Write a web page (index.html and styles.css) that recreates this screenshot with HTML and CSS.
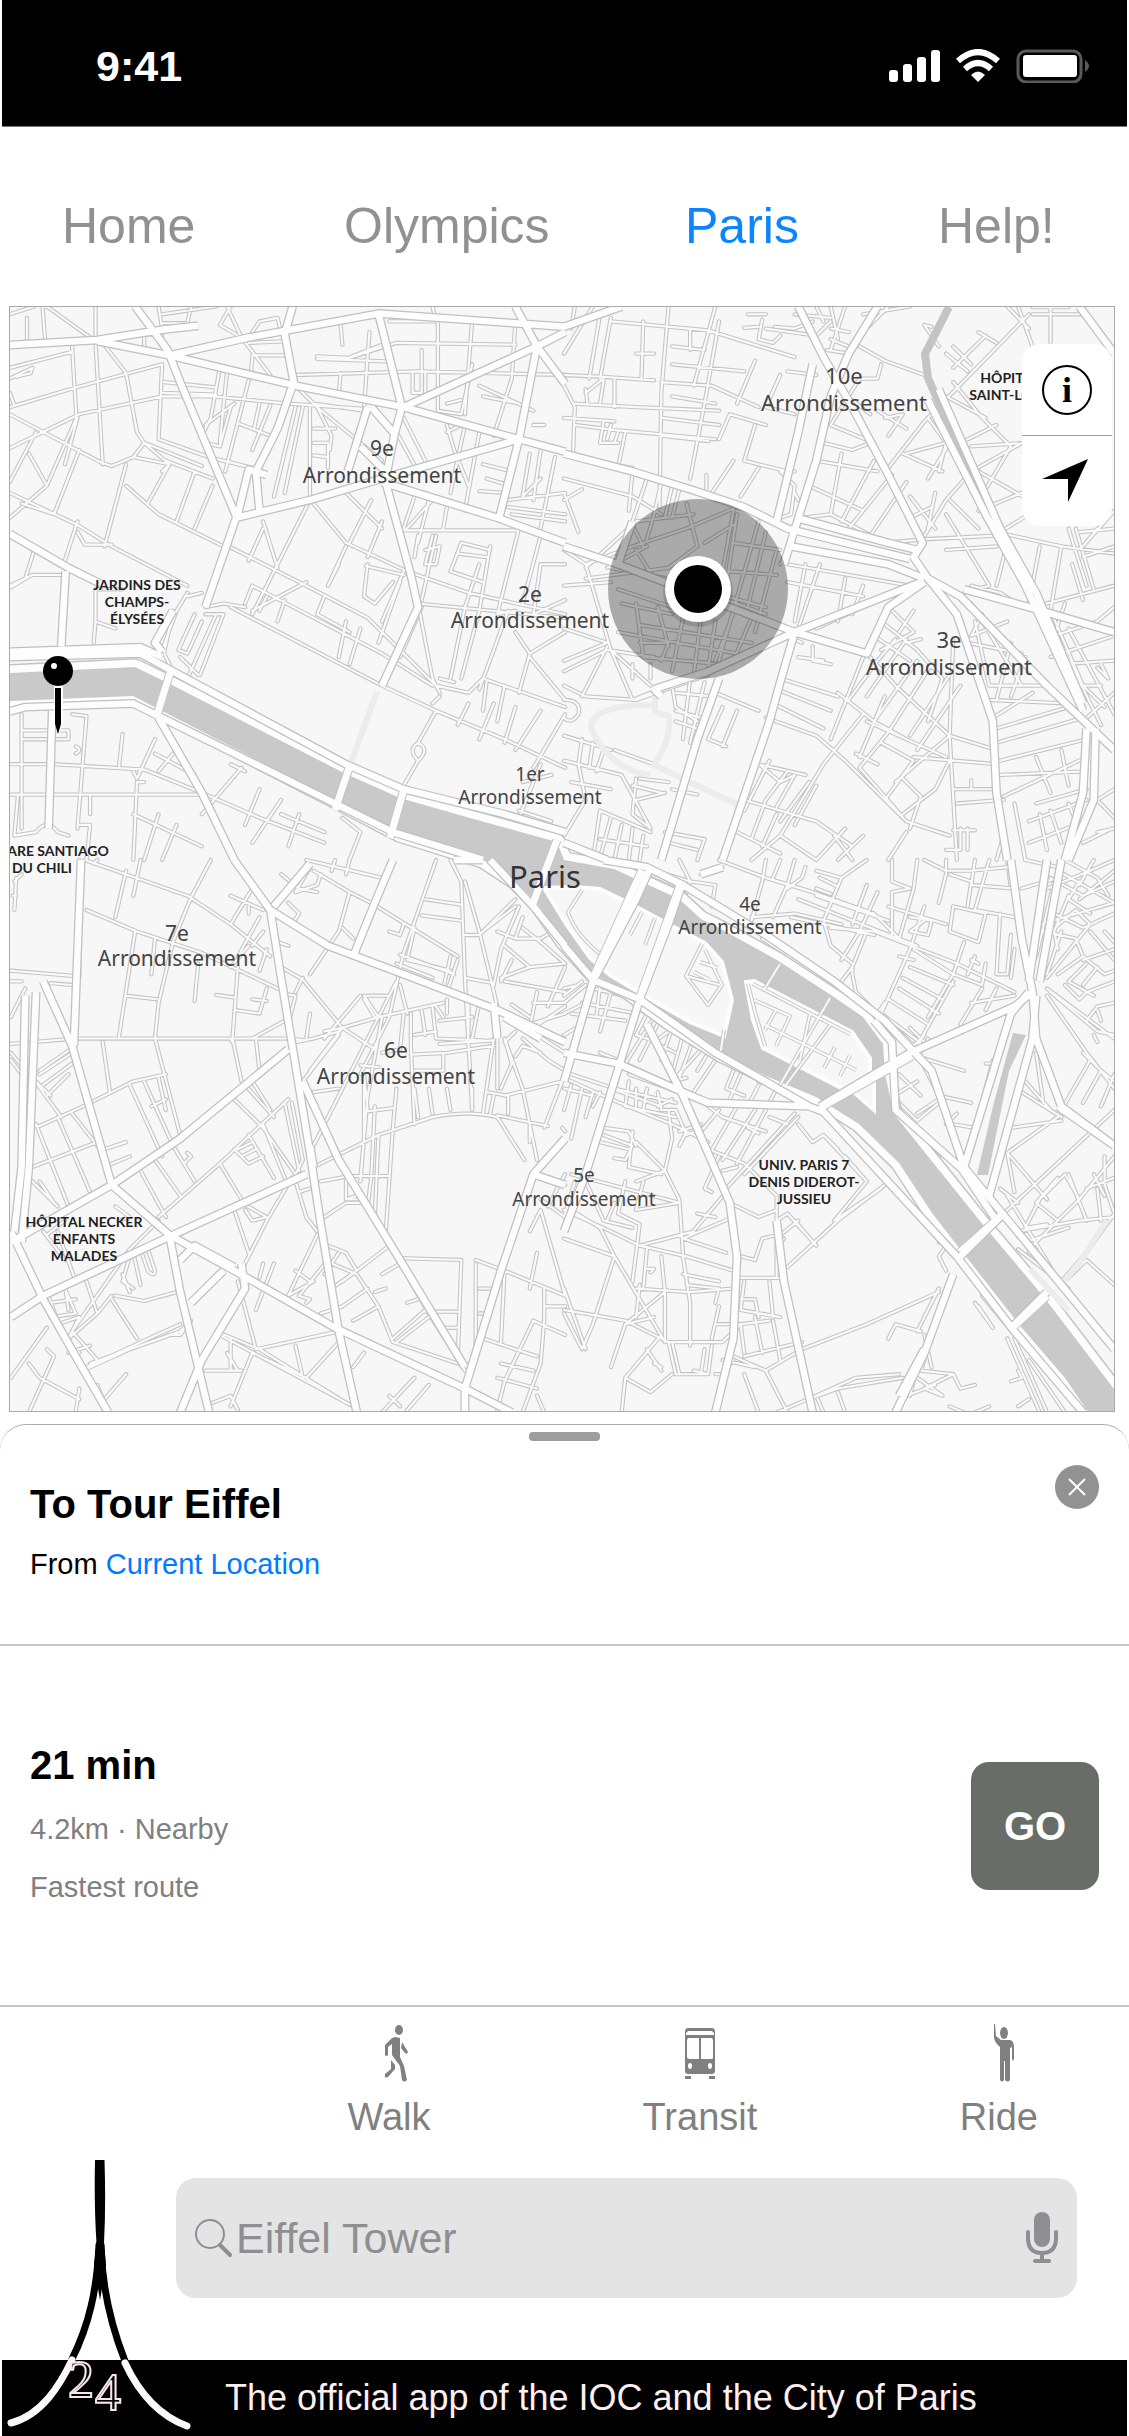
FILE: index.html
```html
<!DOCTYPE html>
<html lang="en">
<head>
<meta charset="utf-8">
<meta name="viewport" content="width=device-width, initial-scale=1">
<title>Paris map</title>
<link rel="stylesheet" href="styles.css">
</head>
<body>
<header class="status">
  <span class="status-time">9:41</span>
  <svg class="status-icons" viewBox="889 48 201 34" width="201" height="34" aria-hidden="true">
    <g fill="#fff">
      <rect x="889" y="69" width="9" height="12" rx="3"/><rect x="903" y="63" width="9" height="18" rx="3"/>
      <rect x="917" y="56" width="9" height="25" rx="3"/><rect x="931" y="49" width="9" height="32" rx="3"/>
      <path d="M978 81l-7-7q7-7 14 0z"/>
      <rect x="1023" y="54" width="54" height="22" rx="3"/>
    </g>
    <g fill="none" stroke="#fff" stroke-width="6">
      <path d="M965 68q13-12 26 0"/><path d="M958 60q20-18 40 0"/>
    </g>
    <rect x="1018" y="50" width="63" height="31" rx="8" fill="none" stroke="#5a5a5a" stroke-width="3"/>
    <path d="M1085 59q8 6 0 12z" fill="#5a5a5a"/>
  </svg>
</header>

<nav class="tabs">
  <a href="#home">Home</a>
  <a href="#olympics">Olympics</a>
  <a href="#paris" class="active" aria-current="page">Paris</a>
  <a href="#help">Help!</a>
</nav>

<main>
<section class="map" aria-label="Map of Paris">
  <svg class="map-canvas" viewBox="10 307 1104 1104">
    <defs>
      <g id="minor">
        <!-- north-west -->
        <path transform="translate(0 300) scale(.3604 .3571)" d="M27 40L95 18M75 50V115M118 18L125 110M130 18L250 105M265 18V120M265 120L285 460M27 190L200 145M27 220L90 190L85 205L45 215M200 130L212 330L130 520L27 610M27 300L210 245L450 180M40 295L27 260M27 320L280 455L310 465L370 440L400 400L560 465M27 415L220 320L450 270L590 270L800 290L1010 305M285 120L350 205L380 370L400 400M440 20L450 80M450 40L600 18M450 65H520L530 18M400 130V95L450 100M610 70L640 18M610 70L670 105L750 210M670 105L640 40L630 18M700 90L720 60L770 50L780 90M690 120L800 115M700 155H800M700 160L695 220M450 180L440 390L580 440L700 470M455 230L600 245M450 260L600 265M610 190L585 330L560 380M630 200L610 400M690 225L625 480M650 290L570 350M660 345L750 380M720 290L705 360M570 400L610 410L640 300M750 295L700 420M820 210L1160 200L1568 210M945 70L950 125M880 158L970 162L1100 120L1430 125M970 160L1060 125M1080 60H1210L1200 18M1215 60V310L1280 320L1310 180M1310 60L1290 320M1430 60L1420 220L1370 380M1145 200V260H1170V140M1180 200V270M1025 90L1010 300M945 205L940 270M880 165L1070 172M1330 240L1480 310M1280 280L1240 290M1340 270L1440 290M1480 350H1510M820 240L880 300L1060 450M860 300V550M840 300L790 540M820 300L760 550M870 290L1010 310M870 360H930M870 400H910V470M870 435L910 440M880 300L920 380L915 420M1100 370L1160 480M1120 330L1190 470M1240 350L1260 420L1300 520M1240 370L1280 350M1290 350L1250 540M1330 370L1290 590M1340 460L1420 480M1350 500L1400 515M1330 535L1400 540M1410 560L1568 540M1420 600L1568 620M1410 580L1568 600M1470 430L1450 550L1500 500M1500 420L1480 560M1540 440L1500 640M1110 645H1440M1200 560L1125 645M1240 580L1230 640M1150 550L1120 640M1190 560L1160 680M860 560L700 880M870 570L960 680L1130 760L1300 820L1568 880M960 540L1060 640M1030 560L970 680M1060 620L1020 720M730 620L770 750M730 640L690 730M625 685L830 790L1020 890L1210 1080M700 800L680 850M700 800L1060 990L1200 1080M740 830L720 870M790 840L770 900M850 790L700 870M640 860L850 970L1060 1080M680 860L620 850L570 860M570 880L620 880L555 1050M600 880L520 1060M480 870L455 990L480 1040M500 1000L550 1050M520 820L490 870L450 980M520 830L560 820M540 880L495 980L520 990L560 900M960 900L940 1000M1000 920L970 1020M900 830L880 880L970 930M1020 740L1010 830L1040 850L1090 790M1015 745L1120 770M960 690L910 800L940 740M1120 760L1060 900M1110 790L1050 960M1160 850L1200 1060L1220 1100M1170 860L1110 1000M1280 680L1250 760L1340 790M1270 710L1350 720M1280 680L1360 700M1330 740L1290 860L1250 1060M1360 690L1330 870L1280 1060M1200 660L1180 740H1210L1220 690L1180 700M1160 660L1150 720M1210 660L1170 840M1440 640L1380 880L1430 870M1500 660L1450 850M1410 870L1330 1090M1430 930L1470 990L1440 1100M1500 740H1568M1500 740L1480 880L1568 840M1160 850L1568 890M1470 990L1568 930M1470 1000L1568 1120M1060 1080L1210 1150L1400 1230L1568 1310M1210 1080L1300 1100L1340 1060L1568 1140M1350 1070L1340 1150M1400 1080L1380 1180M1220 1060L1260 1070M1200 1130L1220 1110M1300 1130L1270 1190M1370 1130L1330 1230M1430 1140L1400 1240M1500 1150L1430 1260M1568 1160L1480 1310M1210 1150L1160 1240Q1130 1260 1160 1290L1120 1360M1160 1240Q1195 1260 1160 1290M1500 1300L1440 1450M1530 1330L1450 1350M1440 1430L1530 1460M100 370L27 510M80 430L130 520M27 540L215 630L310 690L520 800M215 650L235 685L310 685M350 520L440 600L620 690M370 440L470 460L410 570M350 460L290 690M220 420L150 600L60 570M400 400L470 460L450 480M540 480L490 620M590 520L540 640M460 450L590 500M215 330L180 460M95 700L70 780M27 800L90 770L170 770M30 805L80 775M215 620L180 730M320 920L265 900L260 960M340 810L265 810V900M120 18L130 20M60 1160V1480M60 1230H120M60 1205H190V1230H100M150 1300H27M27 1385H560M200 1160L240 1165L215 1480M210 1250Q230 1260 210 1270M340 1215L330 1310M150 1300L400 1315L560 1380M430 1230L380 1340L370 1320M380 1350H400M380 1350L370 1568M480 1270L440 1320M430 1270L540 1330M670 1310L560 1440M640 1300L680 1320M560 1380L720 1450L900 1520M780 1400L700 1520M720 1370L680 1470M830 1440L800 1530M780 1440L900 1490M370 1440L560 1530M440 1440L400 1568M490 1470L450 1568M250 1390V1440M220 1470H250L240 1568M50 1385L40 1500L100 1490Q130 1450 160 1490L190 1500M950 1450L1000 1490L970 1568M1000 1430L1080 1500L1200 1540L1300 1568"/>
        <!-- north-east -->
        <path transform="translate(564 300) scale(.3604 .3571)" d="M0 150L80 18M0 210L110 215L250 225M100 40L70 220M130 50L100 220M130 60L400 85L640 160M30 18L20 80M220 60L215 220M200 150H250M290 18L270 260L265 580M420 18L360 240M300 130L390 140M350 80V140M500 78L540 75M510 40H560M550 55L540 110L580 120L600 100M585 75L640 80L690 60M0 240L30 300L25 430M25 290L200 300L430 310M30 350L150 365L420 390M0 330L140 340M60 250L65 290M110 225L100 290M60 260L110 220M140 220V300M270 230L410 240L540 300M430 390L460 320L560 350M530 170L480 290M430 60L390 290L350 500M300 180L500 200M300 270L420 290M270 330L430 350M270 380L400 395M110 340L100 400H150M150 370L140 400M130 350L120 390M170 370L150 470M0 500L190 550L270 600M70 450L190 470M50 530L0 560M190 480L180 590M230 500L190 620M270 510L250 600M300 520L280 610M320 530L300 610M395 490V530M470 450L410 540M540 470L490 550M530 350L500 450L620 480M600 210L560 300L640 320M620 200L700 210M560 80L700 100L740 60M640 40L740 50M700 18L720 60M740 18L760 110M780 18L740 140M830 40L960 18M900 18L800 120M820 130L890 170L1000 210M820 220H870L880 180M740 80L790 90M740 110L790 130M730 140L790 150M640 480H600L640 520L630 600L600 610M640 540L650 560M720 400L800 420L850 400M740 350L860 400M700 450L870 480M680 520L830 590M770 430L740 600M860 450L770 620M910 490L790 640M950 510L850 660M660 610L740 600L890 680L1000 670M650 630L600 740M740 350L820 220M800 280L850 320M870 310L950 360M890 330L940 320L900 380M1000 340L900 470M950 430L1060 400M940 430L1050 480M1010 330L1060 400L1040 480M1070 400L1010 500M1000 660L1060 560L1130 480L1290 390M1030 540L1010 640M1070 560L1150 640M960 550L1030 640M1020 580L960 610M1000 70L1040 130M1020 75L1000 70M1150 90L1200 120M1080 190L1170 100M1080 130L1130 180M1060 150L1120 200M1290 40L1000 340M1230 18L1290 80M1260 18L1300 130M1300 40H1450M1350 18V120M1300 20H1400M1080 230L1160 330L1240 410L1170 530M1200 350L1100 400M1060 270L1170 330M1130 410L1280 400M1150 590L1270 540M1210 650L1290 600M1150 480L1290 560M1230 680L1200 800M1200 650L1380 690L1527 710M1320 690L1290 850M1380 690L1350 870M1400 640L1450 800M1420 640L1470 810M1440 720L1527 690M1430 650L1527 640M1480 640L1440 690L1527 590M1410 740L1440 840M1300 860L1527 800M1000 670L1200 660M1060 600L1180 800L1110 820M1130 800L1210 820L1270 860M1060 700L1200 690M780 780L760 900M830 800L800 880M710 740L650 920M670 740L640 900M620 740L960 800M620 790L830 830M850 850L700 920M900 860L970 930L880 980M970 870L930 930M880 900L980 980M860 940L960 1010M920 950L870 1010L790 1120M950 950L840 1110M990 950L950 960M980 980L1050 1060L1010 1180M830 1000L740 1230M840 990L920 1080L1070 1220M1080 950L1070 1220L1090 1568M980 1010L860 1180M1020 1020L900 1210M1070 1050L960 1220M1100 1080L980 1260M690 970V1010L740 1020M660 960L640 950M650 1000L720 1010M600 1060L760 1110M590 1090L740 1150M580 1130L720 1200M560 1170L700 1220L780 1290L950 1460M830 1160L720 1300L600 1500L520 1568M890 1110L820 1280M810 1270L870 1300M900 1210L820 1310L890 1390L950 1460L1070 1500M880 1240L970 1290L890 1400M970 1280L1200 1300M1070 1220L920 1350M840 1180L1060 1280M1070 1220L1200 1260M760 1100L860 1180L950 1230M1070 1290L1030 1370L940 1440M940 1340L990 1390L960 1480M1080 1370H1200M1130 1345V1370M1090 1410L1220 1400M1100 1480V1540H1060M1120 1480V1540M1080 1485H1140M950 1490L900 1568M1130 850L1270 1080M1160 880L1130 940L1230 900M1120 960L1270 990M1140 900L1180 1080M1240 960L1200 1120M1280 1000L1240 1110M1180 1080L1340 1080M1180 1120L1400 1130M1190 1170L1300 1100M1200 1200L1400 1140M1200 1240L1440 1170M1210 1290L1450 1230M1210 1330L1450 1320M1220 1390L1450 1280M1310 1280L1350 1380M1380 1260L1400 1360M1310 1410L1450 1370M1290 1460L1450 1400M1290 1520L1420 1470M1250 1410L1280 1568M1320 1440L1340 1540M1350 1430L1380 1520M1400 1410L1420 1460M1200 1568L1220 1500M1310 820L1490 1190M1350 870L1440 1080L1500 1140M1390 850L1360 940L1480 900L1527 860M1400 920L1527 1160M1350 1000L1527 940M1380 1020L1527 1010M1490 1020L1510 1060L1480 1030M1400 1080L1490 1080M1527 1100L1440 1180M1527 1370L1480 1400L1527 1450M1480 1490L1527 1480M1440 1520L1520 1480M0 700L60 740L130 980L240 1080M40 650L0 540M60 740L190 690L340 640L480 580M60 750L200 620L360 600M190 630L220 690M250 600L230 670M340 570L370 690M470 590L440 760M120 750L230 690M130 750L290 780L560 880M60 780L290 750L370 690M0 800L130 790M200 700L250 780M390 680L470 630M480 600L450 800M540 620L430 1010M560 650L510 860M590 700L530 930M470 680L600 700M460 760L590 770M450 830L560 860M150 810L300 860M160 850L300 880M200 850L220 1000M260 860L290 970M330 890L300 1040M380 890L360 1050M420 900L400 1030M480 850L420 1010M520 890L470 1010M210 910L520 960M150 930L480 990M210 960H290L270 1010M220 1000L440 1020M0 920L120 960L0 1010M120 970L50 1110M130 980L190 1120L240 1100M0 1040L120 980L250 1000M60 1110L200 1120L400 1050M0 1080L60 1110M190 1020V1060M240 1020V1060M0 1120Q50 1120 40 1160Q20 1190 0 1170M0 1220L130 1260M50 1230L40 1300M80 1240L70 1310M110 1260L90 1320M0 1290L160 1330L240 1480M20 1350L130 1370M40 1300L60 1400L0 1500M140 1260L250 1300M300 1080L310 1140L370 1180M310 1100L410 1110M350 1060L330 1230M390 1070L350 1240M310 1150L380 1170M310 1180L370 1200M420 1100L540 1150M440 1140L400 1230M480 1150L440 1250M400 1230L450 1250M210 1340L290 1350M190 1360L270 1380M200 1400L280 1380M300 1370L370 1385M200 1340L190 1440L240 1480M100 1430L80 1568M100 1430L240 1490M130 1450L100 1560M160 1470L140 1568M190 1480L180 1568M220 1500L210 1568M100 1510L230 1530M280 1490L390 1510L370 1568M290 1520L370 1540M530 1290L600 1350L640 1330M540 1300L670 1330M570 1290L500 1430M620 1320L560 1400L520 1510M500 1400L700 1460L800 1530M640 1330L590 1420M700 1360L640 1470M680 1350L600 1460M480 1490L600 1550M590 1440L550 1530M780 1480L700 1568M750 1500L800 1568M830 1500L760 1568M600 1500L700 1568"/>
        <!-- south-west -->
        <path transform="translate(0 860) scale(.3604 .3571)" d="M45 50L40 140M60 40L40 60M35 100H45M235 0L520 100L640 180L750 270M270 0L260 10M350 30L320 160M390 0L370 100M585 0L530 105L480 230L440 400L430 500M240 140L380 200L560 260L770 360M375 200L330 495M430 220L420 320M550 290L540 395M350 380L435 390M600 378L650 385M660 300L645 500M650 420L720 430L740 360M700 390L740 395M640 500L645 510M690 240L640 300M640 100L730 140M700 80L640 180M690 130V150M720 160L660 270M730 200L700 240M770 230L800 240M740 250L720 310M780 40L830 80L880 90M860 20L820 90L880 70L890 40M800 120L830 150L810 180M870 30L970 90L1030 120L1270 270M970 90L940 200L860 320M950 190L980 220M850 0L1060 50M930 0L920 30M970 0L960 40M1210 0L1120 260L1080 440L1000 600M1180 110L1280 125M1170 155L1280 170M1080 200L1110 210L1120 180M1110 265L1260 320M1100 290L1200 330M1130 280L1250 310M1150 190L1130 280M1250 270L1230 360M1270 280L1240 370M1250 0L1280 60L1290 330L1310 700M1290 60L1330 200L1380 410M1290 210H1330M1330 210L1430 110M1340 200L1430 130M1440 130L1390 250L1370 350M1380 200L1430 220L1450 160M1400 240L1470 300L1568 290M1390 330L1470 300M1430 220L1500 220L1568 180M1450 190L1500 230L1568 290M1420 280L1390 340M1400 340L1568 370M1568 300L1520 410M1480 400H1568M1490 370L1470 470M1420 405L1470 440M1470 460L1568 430M1480 470L1568 410M1290 330L1370 345M1100 340L1050 440L870 800M1110 350L1130 430M1080 380H1010L1050 440M1000 380L900 500M1010 390L1040 440M780 300L840 335L950 470L860 590M840 330L820 370M790 375L820 380L800 460M860 430L850 500M900 480L950 470L1050 440L1230 400M820 510L870 500L940 480M950 470L1040 530M940 490L840 620M1060 440L1020 660L1000 900M1120 430L1110 530L1060 540M1140 430V520L1150 740M1170 420L1180 490M1200 410L1210 500L1340 505M1150 490L1210 480M1220 450L1310 440M1210 410L1230 440M1240 390V430M1300 390V490M1330 400L1310 500M1000 575L1050 580M1140 545L1240 540L1370 520M1230 545V590H1150M1220 515L1370 505M1100 640L1090 750L1070 1050M1150 640L1160 720M1190 640L1200 710M1240 640L1250 700M1310 640V700M1370 500L1350 640L1340 710M1380 490V640M1400 500L1420 570L1390 640M1400 500L1450 640L1490 840M1350 650L1410 660V710M1370 660L1360 710M1430 480L1400 510M1430 550L1450 520L1500 540M1450 500L1520 560L1568 590M1490 490L1568 540M1400 660L1560 620M1380 715L1520 745M1470 740V790M1560 620L1510 750M870 860L1050 770L1200 720Q1300 700 1380 720L1455 840M940 640L870 650M1010 600L1020 700M1010 705L1090 695M1040 690L1030 890L1020 970M1010 620V780L1000 890M1050 770L1040 1000M890 900L970 885H1080M960 890V950H1000M900 1000L960 960H1000M970 890L1000 950M960 950L990 940M30 515L210 500H800L850 505M285 510L305 650M430 500L500 770M645 500L670 620M710 500L720 590M700 500L790 450M230 690L370 620L460 600M360 630L450 830M400 620L480 800M440 610L460 700M420 690L460 670M30 540L90 610L170 720M210 520L110 590M200 540L110 600M200 570L120 630M190 600L130 660M100 620L140 660M70 745H110L230 690M100 740L190 970M160 720L250 930M200 710L270 800M90 860L270 790M290 810L350 790M300 855L360 830M390 870L460 1000M430 840L500 940M480 800L540 900M510 850L530 830L520 820M440 1000L610 850L800 670M610 850L670 950M640 660L730 750L820 880M680 630L760 720M700 620L750 700M690 770L760 890M650 810L690 850L730 830M660 810L700 790M670 830L710 810M730 740L790 890M790 680L830 870M810 680L840 840L810 900M820 900L850 1000L880 1040M830 930L860 920M670 960L740 1000L700 1010L680 980M650 980L690 1100M810 890L740 1010L680 1130M90 900L160 970M110 900L150 960M120 1040L180 1120M160 1040L210 1180M130 1050L180 1010M440 1010L360 1090L200 1320M320 970L360 1000L330 1010M370 1100L390 1190M360 1110L340 1180L370 1200M390 1090L410 1150Q430 1170 430 1150L410 1090M340 1160L360 1210M320 1220L400 1235L490 1210M310 1230L380 1340M240 1180L270 1270M180 1200L210 1270L140 1280M180 1190L190 1260M140 1240L210 1230M130 1210L160 1290M160 1300L220 1280L190 1340M200 1320L270 1400M190 1380L250 1360M220 1380L200 1370M190 1340L270 1270L310 1220M240 1420L500 1300M250 1410L500 1320L520 1300M470 1330H500L530 1290M230 1430L360 1370M610 1330L980 1530M600 1320L720 1370L960 1520M640 1340V1430M630 1380L660 1430M570 1430H670M700 1380L640 1530M590 1520L640 1500L660 1540M660 1180L710 1370M710 1370L940 1320M820 1360L840 1450M940 1350L850 1450L700 1380M730 1130L720 1170M760 1130L710 1260M880 1050L800 1220L870 1180M820 1150L860 1180M910 1120L830 1220L860 1230L850 1240M910 1080L960 1100L990 1150L1080 1080M990 1150L920 1200M990 1150L950 1180M940 1100L900 1160M920 1130L990 1160L1050 1250L1090 1350L1270 1410M1060 1160L1110 1130M1040 1210L1070 1200M950 1250L1020 1200M980 1290L1050 1250M950 1250L890 1270M1100 1115L1280 1120L1270 1400M1320 1120L1400 1150L1520 1200M1320 1130V1390M1180 1265H1270M1220 1310H1270M1330 1200H1370M1330 1270H1350M1130 1240L1160 1230M1180 1260L1090 1340M1190 1280L1100 1350M1110 1130L1190 1270L1290 1430M1150 1450L1040 1568M1190 1470L1130 1540M1080 1500L1110 1530M980 1420L1010 1380M1400 1150L1390 1350M1340 1340L1490 1390M1480 1290L1400 1460L1380 1540M1480 1290L1568 1330M1380 1450L1490 1480M1390 1410L1480 1430M1510 1200V1290L1500 1410L1450 1547M1520 1200L1568 1220M1510 1250H1568M1490 1100L1470 1200M1490 1500L1510 1547M1500 980L1470 1040M1500 980L1568 1220M1500 950L1568 1000M1568 880L1520 970M1520 900L1568 910M1560 750L1568 760M30 1450L130 1310M80 1410L110 1450L220 1510M130 1370L150 1390L80 1547M350 1440L290 1510M270 1470L300 1547M220 1480L210 1547M30 440L70 360M30 560L60 600M30 310L210 325V500M30 340H60M140 345L200 350M220 0V330"/>
        <!-- south-east -->
        <path transform="translate(564 860) scale(.3604 .3571)" d="M0 60Q60 60 190 130M30 80L0 170L50 230L110 270M180 200L240 230L280 140M230 160L220 220M210 140L260 160M250 170L230 210M240 50L330 90M270 40L300 50M250 30L350 60L340 90M320 0L350 60L420 70L410 130M430 0L560 50L690 90L860 150L930 220M440 20L380 40M560 0L550 60L520 170M600 0L580 50M640 0L620 70L580 160M670 20L660 50L620 80M700 30L770 50L840 0M710 50L760 75M700 80L740 95M770 50L720 170L740 240L800 290M840 70L800 180M870 90L820 200L770 280M910 0V60L960 80L910 90V220M980 0L970 80L930 220M900 130L1060 180M700 100L900 170M650 110L850 190L980 240M740 190L860 200L1090 290L1250 370M520 160L640 150L770 180M630 160L860 210M550 220L610 260M840 200L800 300L740 380M1000 170L960 200L1010 210L1020 170L960 160M1000 130L960 250L880 430M1080 130L1070 200L1150 230L1170 150L1080 130M1070 40L1130 60L1120 130M1060 0V40L1040 120M1000 0L1060 30H1130L1230 20M1140 0L1130 70L1250 80M1180 0L1140 140L1250 160M1110 230L1080 320L1010 440M1130 280L1150 290M1140 270L1120 320M970 250L1080 320L1160 350L1170 290M930 270L970 280M960 300L1080 350M940 330L1050 390M930 360L1040 430M900 390L1010 460M880 430L1000 520M1080 340L980 520M1160 360L1100 460M1250 380L1130 400M1200 360L1170 420M1240 210L1230 320H1200L1210 150M1250 250L1240 330M800 300V320L810 370L870 430L890 400M740 370L820 380L800 400M810 370L760 390M850 420L820 400M530 140L520 170M390 250L430 310M220 350L250 330L240 310M210 420L290 450L430 540M230 430L200 490L260 510M250 440L170 570M260 460L210 560M290 480L250 510L310 540M300 470L270 560M330 490L300 600M360 500L320 610M390 520L300 620L340 610M400 540L370 590M420 560L360 650M490 600L460 670M540 630L510 690M470 590L450 640L500 660M540 620L620 650M590 640L560 700M170 570L320 640M180 600L320 650M100 540L150 560M0 490L50 460M20 430L170 450M50 400L200 430M100 350L90 440M130 370L100 480M80 360L210 390M0 430L60 400M0 400L60 350M0 380L50 340M0 360L40 350M20 600L140 640L310 680M0 610L130 670L300 740L400 790M0 640L80 660M20 630L0 700M50 640L20 780M80 650L60 720M100 650L80 690M130 640L270 690M150 610L140 640M180 620L170 690L310 720M200 640V690M230 640L220 700M260 650L270 700H310M300 670L260 690M310 700L340 770L390 750M320 760L380 740M290 700L300 780L280 870L320 950L330 1100M110 750L180 760L200 800M110 770L190 800L170 840L140 835M100 790L180 810M190 760L180 860L270 880M200 790L280 870L200 900M340 760L320 800M400 690L440 720L560 760M430 700L380 760M480 690L400 830M530 700L440 840M560 700L480 850M510 750L540 765M640 710L450 920M650 720L500 880M570 720L620 740M400 810L500 850L590 940V1170M430 830L390 920L410 930M440 870L480 860M460 960L540 1000L590 980M650 740L690 790L720 770L840 900L750 1010L880 920M840 900L780 830M730 780L760 810M890 910L760 1010L620 1140M640 1010L700 1080M590 1010L620 990L700 1080M600 1050L650 1010M610 1060L590 1090M0 980L130 1040L210 1080L340 1110M0 1000L30 900M20 880L320 960M20 980L100 1030L140 1110L0 1060M60 900L110 1010L190 1030M140 960L120 1010M170 900L150 990L210 1020L190 1180M200 980L320 960M220 900L200 980M350 1050L450 930M370 990L420 1000M330 1060L450 1100M330 1060L470 1000M210 1080L360 1040M140 1110L80 1300L50 1370M140 1110L280 1350M230 1090L220 1200L200 1200M230 1145H250L240 1155M270 1110L280 1210V1350M330 1110L350 1240V1360M340 1110L470 1150M330 1160L430 1180M340 1190L430 1200L420 1240M200 1200L350 1210L470 1200M280 1210L170 1300L130 1420M210 1190L200 1280M0 1260L170 1290L290 1350L440 1350M0 1270L50 1370M0 1200L60 1370M170 1300L250 1280M270 1330L170 1450L240 1490L300 1440M230 1370L270 1430M290 1350L310 1440L400 1440M250 1410L270 1420M170 1450L160 1547M490 1110L530 1120L550 1060L590 1050M490 1170H610M500 1180L490 1260L600 1280M490 1230H530L540 1280M570 1180L580 1280M530 1280L550 1380M420 1300H490L440 1350M430 1250L410 1340M490 1300L570 1290M500 1390L660 1350M490 1300L500 1380M580 1290L600 1400M470 1390L560 1430L660 1370M440 1400L530 1420M560 1430L620 1547M500 1440L540 1547M300 1350L320 1440M390 1370L380 1440M410 1360L400 1440L360 1430M470 1400L440 1440L420 1440M660 1370L840 1300L1040 1210M700 1500L810 1450L930 1440M680 1510L760 1480L940 1450M760 1490L780 1547M700 1500L720 1547M590 1547L700 1500M900 1340L920 1300L990 1320M1000 1330L1020 1420M1000 1400L990 1430L1080 1440L1100 1480L1140 1470M980 1450L1050 1500L1000 1480L1080 1440M950 1500L1030 1470M980 1420L960 1500M1040 1200L980 1320M1070 1530L1110 1547M1180 1530L1140 1547M1060 1080L1040 1110L1060 1150M1040 1070L1090 1090L1150 1170L1160 1210M1140 1240L1190 1310L1150 1250M1160 1220L1250 1330M1230 1340L1320 1547M1250 1340L1340 1547M1290 1400L1390 1547M1240 1460L1270 1450L1260 1430M1260 1530L1290 1510M1330 1240L1527 1450M1260 1040L1430 1010L1527 1000M1280 1070L1400 1030M1300 1080L1430 950L1527 830M1220 990L1527 700M1320 950L1280 1030L1340 1020M1310 960L1390 880L1430 950M1370 1010L1310 960M1370 890L1310 960M1400 880L1450 1010M1480 920L1490 1010M1450 920L1527 890M1500 830V910L1527 990M1470 880L1500 940M1250 930L1230 820L1370 720M1230 820L1340 950M1240 750L1380 730M1270 650L1380 720M1280 620L1350 700M1310 540L1330 680M1210 920L1260 960M1230 940L1380 1190M1400 1170L1527 990M1380 1190L1450 1120L1527 1190M1380 1180L1440 1110M1290 1100L1380 1180M1260 1090L1400 1200M920 670L980 730L1040 680M980 620L900 670M930 600L990 660M990 560L1040 660M1040 660L1130 680M1080 740L1140 750M1090 710L1060 740M970 780L1040 830M980 550L1110 590M1170 570H1200M1160 680L1190 560M1040 670L980 710M1010 500L990 540L930 480M960 530L1000 490M960 470L1010 520M1340 380L1450 540L1527 640M1340 360L1527 500M1350 370L1480 480L1527 490M1390 350L1430 390L1450 370M1450 450L1480 410L1527 400M1480 420L1490 450M1470 490L1480 510M1460 560L1380 700M1490 590L1440 680M1527 600L1490 690M1440 540L1490 590L1527 620M1340 330L1460 180L1420 140L1350 200M1330 200L1420 220L1440 270L1370 320M1320 180L1527 120M1340 140L1440 190L1527 150M1400 100L1360 200L1370 250M1430 60L1400 110L1460 150M1340 80L1460 30L1527 0M1350 50L1440 100L1527 60M1370 30L1527 120M1390 0L1480 50L1510 100M1470 0L1430 70M1527 30L1430 110M1340 320L1380 200M1440 270L1500 320L1527 310M1450 290L1400 340L1470 380M1480 300L1440 350M1527 340L1450 370M1527 250L1440 280M1500 200L1527 230M1460 200L1527 280M1270 80L1370 50M1230 0L1240 80M1280 0L1370 20M1310 270L1360 60"/>
      </g>
      <g id="major">
        <path transform="translate(0 300) scale(.3604 .3571)" d="M27 126L270 112L460 82L550 72M270 115L470 155L820 240L1120 300L1440 390L1568 425M375 18L465 140L500 230L570 400L655 605M470 155L690 105L1050 38L1568 75M812 18L790 95L815 230L770 360L710 480L720 590M1050 38L1115 300L1095 375M1120 300L1490 130L1568 90M1490 130L1440 390L1385 610M1430 18L1490 130L1568 235M655 610L860 560L1060 500L1440 390M1020 300L965 480M1030 300L1095 375L1070 500M1000 410L1070 480M1070 510L1140 770L1160 860L1060 1080M1060 510L1380 610L1568 680M655 610L570 860M660 600L690 475L740 490M27 655L190 750L290 800M182 760L170 970M440 1170L560 1380L650 1568M145 1150L135 1480M27 985L390 972L450 1000M450 985L430 960L480 870M440 1165L930 1410L1090 1490L1250 1540L1340 1568M27 1152L70 1140L370 1130L440 1165M27 1000L390 990L480 1040L960 1300L1120 1370L1400 1440L1568 1490"/>
        <path transform="translate(564 300) scale(.3604 .3571)" d="M0 75L160 18M0 430L190 480L350 530L500 580L620 640L960 725M645 610L900 680L980 700M630 690L900 740L1000 780M650 18L720 160L800 300L900 490L995 680L970 720L1010 780L1090 880L1130 1000L1190 1180L1200 1380L1230 1568M870 18L790 150L740 270L700 450L610 740M690 180L650 370L590 620M640 930L600 1070L570 1180L440 1568M430 1060L370 1230L270 1568M1010 280L1170 600L1280 800L1440 1150M1040 250L1210 640L1310 820L1440 1130M990 790L640 930L400 1040L250 1090M1010 780L1100 830L1340 1080L1527 1260M1110 810L1290 860L1527 930M640 930L840 990L900 860L1000 790M1450 1200L1440 1380L1390 1568M1475 1200L1470 1400L1400 1568M1430 18L1527 150M0 690L150 740L640 930M250 1090L270 1110M0 1520L120 1568M190 620L150 740"/>
        <path transform="translate(0 860) scale(.3604 .3571)" d="M650 0L750 140L780 330L860 820L890 1020L940 1320L990 1547M860 10L760 130M750 140L910 240L1120 320L1380 420L1568 510M1090 0L1040 120L980 270M225 0L205 520M120 340L200 520L310 910L470 1050L650 1150L930 1310L1290 1480L1420 1547M30 1070L310 910L500 780L800 530M30 1280L120 1220L480 1050L850 880M30 1040L120 1230L210 1390L300 1547M100 370L80 860L60 1070M70 380L60 860L40 1040M470 1050L500 1210L580 1547M840 620L940 840L1080 1070L1290 1420M870 860L860 800M1568 780L1480 880L1390 1150L1290 1480M1290 1480V1547M1480 880L1568 910M500 1120L540 1080L650 1140M670 1130L680 1200L560 1400L500 1547M530 1240L620 1150M1360 0L1480 130L1568 240M1340 0L1260 0M1370 400L1380 500M1400 440L1500 500"/>
        <path transform="translate(564 860) scale(.3604 .3571)" d="M0 240L80 335L210 390L420 540L680 690L720 705L1090 1110L1250 1320L1440 1547M0 540L150 570L330 650L400 680L680 690M240 20L200 110L80 340L0 620M330 60L290 180L210 390L60 880L0 1040M230 460L330 660L460 960L480 1110L470 1340L420 1547M110 0L230 20L330 70L560 210L750 340L890 450L1020 590L1110 860L1290 1080L1527 1370M860 450L910 510L920 700L1120 880M710 690L960 540L1250 410L1300 370M1240 0L1270 220L1300 370L1310 500L1380 690L1527 800M1290 370L1240 430L1110 860M1310 380L1300 500L1180 940M1340 0L1290 340M1380 0L1320 340M590 1010L610 1180L690 1547M1080 1160L1000 1380L920 1547M1100 860L1200 1010M1000 1370L930 1500M1370 690L1527 800M1090 1120L1220 990M1240 1310L1340 1210M380 40L440 20"/>
      </g>
      <path id="seine" d="M10 673L135 667L170 684L344 773L400 798L470 818L557 842L564 860L614 869L640 881L679 899L701 919L719 928L777 960L834 997L863 1017L883 1044L885 1074L894 1114L984 1226L1043 1296L1114 1389V1412H1088L1065 1378L1022 1328L960 1249L932 1213L899 1163L859 1124L816 1097L766 1076L723 1055L668 1021L629 992L593 974L564 942L537 903L515 881L483 860L400 834L335 800L162 711L133 696L10 701Z"/>
      <path id="island-lanes" d="M582 890L568 912Q575 935 605 958M642 912L630 935M655 918L645 945M702 944L686 976L720 985M705 950L722 985L708 1005L686 976M700 962L718 968M694 972L710 980M748 984L755 1012L765 1046M753 984L850 1034M810 1014L800 1060M754 1000L790 1016L776 1046M765 1025L856 1070M776 1010L765 1030M831 1024L786 1085M835 1047L824 1068M850 1055L840 1076M780 964L764 990M830 998L780 1085M724 1030L720 1056"/>
      <path id="bridges" d="M170 673L156 718M350 765L335 810M404 789L390 838M557 840L532 906M642 870L593 978M680 885L639 1000M820 1108L912 1056M960 1252L1005 1212M1010 1330L1047 1296"/>
    </defs>

    <rect class="land" x="10" y="307" width="1104" height="1104"/>
    <use href="#minor" class="minor-edge"/>
    <use href="#minor" class="minor-road"/>

    <use href="#seine" class="quay-edge"/>
    <use href="#seine" class="quay"/>
    <g class="water">
      <use href="#seine"/>
      <path d="M1013 1033L1026 1035L1009 1071L988 1175H977L993 1106Z"/>
      <path class="canal" d="M949 307L925 354L928 378L984 505"/>
    </g>
    <g class="island">
      <path d="M544 888L575 887L600 889L635 906L670 925L705 943L722 962L732 1000L724 1036L690 1022L655 1002L610 975L590 958L566 924Z"/>
      <path d="M746 982L754 981L825 1018L852 1032L870 1058L870 1074L845 1090L763 1048L753 1020Z"/>
      <path d="M874 1078L849 1088L874 1110Z"/>
    </g>
    <use href="#island-lanes" class="lane-edge"/>
    <use href="#island-lanes" class="lane"/>

    <g class="walkways">
      <path d="M377 692L350 765M10 652L66 650M163 664L188 678M1030 1269L1068 1310M181 1302L204 1392M655 696V712L669 716Q672 740 654 765L738 805L735 827M654 705Q590 705 591 728Q610 770 650 775M1107 1220L1080 1262L1062 1284"/>
    </g>

    <use href="#major" class="major-edge"/>
    <use href="#bridges" class="bridge-edge"/>
    <use href="#major" class="major-road"/>
    <use href="#bridges" class="bridge"/>

    <!-- current position -->
    <circle cx="698" cy="589" r="90" fill="#000" fill-opacity=".31"/>
    <circle cx="698" cy="592" r="35" fill="#000" fill-opacity=".14"/>
    <circle cx="698" cy="589" r="33" fill="#fff"/>
    <circle cx="698" cy="589" r="24"/>

    <!-- destination pin -->
    <path d="M54 686h9v34l-4 16-5-16z" fill="#fff"/>
    <path d="M55 688h6v36l-3 10-3-10z"/>
    <circle cx="58" cy="671" r="15"/>
    <circle cx="54" cy="666" r="3" fill="#fff"/>

    <g class="district">
      <text x="382" y="456">9e</text><text x="382" y="483">Arrondissement</text>
      <text x="530" y="602">2e</text><text x="530" y="628">Arrondissement</text>
      <text x="177" y="941">7e</text><text x="177" y="966">Arrondissement</text>
      <text x="396" y="1058">6e</text><text x="396" y="1084">Arrondissement</text>
    </g>
    <g class="district large">
      <text x="844" y="384">10e</text><text x="844" y="411">Arrondissement</text>
      <text x="949" y="648">3e</text><text x="949" y="675">Arrondissement</text>
    </g>
    <g class="district small">
      <text x="530" y="781">1er</text><text x="530" y="804">Arrondissement</text>
      <text x="750" y="911">4e</text><text x="750" y="934">Arrondissement</text>
      <text x="584" y="1182">5e</text><text x="584" y="1206">Arrondissement</text>
    </g>
    <text class="city" x="545" y="888">Paris</text>
    <g class="place">
      <text x="137" y="590">JARDINS DES</text><text x="137" y="607">CHAMPS-</text><text x="137" y="624">ÉLYSÉES</text>
      <text x="58" y="856">ARE SANTIAGO</text><text x="42" y="873">DU CHILI</text>
      <text x="84" y="1227">HÔPITAL NECKER</text><text x="84" y="1244">ENFANTS</text><text x="84" y="1261">MALADES</text>
      <text x="804" y="1170">UNIV. PARIS 7</text><text x="804" y="1187">DENIS DIDEROT-</text><text x="804" y="1204">JUSSIEU</text>
      <text x="1010" y="383">HÔPITAL</text><text x="1012" y="400">SAINT-LOUIS</text>
    </g>
  </svg>

  <div class="map-controls">
    <button type="button" aria-label="Map information">
      <svg viewBox="0 0 52 52" width="52" height="52"><circle cx="26" cy="26" r="24" fill="none" stroke="#000" stroke-width="2"/><text class="info-mark" x="26" y="38">i</text></svg>
    </button>
    <button type="button" aria-label="Show my location">
      <svg viewBox="0 0 52 52" width="52" height="52"><path d="M47 4L27 47V24H1z"/></svg>
    </button>
  </div>
</section>

<section class="sheet" aria-label="Directions">
  <div class="grabber"></div>
  <div class="sheet-head">
    <div class="trip">
      <h1>To Tour Eiffel</h1>
      <p>From <a href="#location">Current Location</a></p>
    </div>
    <button class="close" type="button" aria-label="Close">
      <svg viewBox="0 0 44 44" width="44" height="44"><path d="M14 14l16 16M30 14L14 30" stroke="#fff" stroke-width="2"/></svg>
    </button>
  </div>
  <div class="route">
    <div class="route-text">
      <h2>21 min</h2>
      <p>4.2km · Nearby</p>
      <p>Fastest route</p>
    </div>
    <button class="go" type="button">GO</button>
  </div>
</section>

<section class="modes" aria-label="Travel mode">
  <button type="button">
    <svg viewBox="-35 0 84 60" width="84" height="60">
      <ellipse cx="17" cy="7" rx="4" ry="5"/>
      <path d="M13 14L18 15V34L22 43L25 57Q22 60 20 57L18 43L10 32V21L6 24V32Q5 34 3 32V22L10 15ZM20 19L26 29Q25 32 23 30L19 25ZM9 37L13 42V46L6 54Q2 56 3 51L9 46Z"/>
    </svg>
    Walk
  </button>
  <button type="button">
    <svg viewBox="-42 0 116 60" width="116" height="60">
      <path fill-rule="evenodd" d="M4 5H28Q31 5 31 9V47Q31 51 28 51H4Q1 51 1 47V9Q1 5 4 5ZM4 8L2 10V12H30V10L28 8ZM5 15Q3 15 3 18V35L5 36H15V15ZM17 15V36H28L29 35V18Q29 15 27 15ZM6 40A2 3 0 1 0 6 46A2 3 0 1 0 6 40ZM26 40A2 3 0 1 0 26 46A2 3 0 1 0 26 40Z"/>
      <path d="M1 53h6v3H1zM25 53h6v3h-6z"/>
    </svg>
    Transit
  </button>
  <button type="button">
    <svg viewBox="-33 0 78 60" width="78" height="60">
      <ellipse cx="11" cy="10" rx="4" ry="6"/>
      <path d="M1 1H2L3 13L8 17H17Q21 18 21 24V36Q20 39 19 36V24L17 25V57Q15 60 12 57V38H11V57Q9 60 7 57V24Q2 20 1 15Z"/>
    </svg>
    Ride
  </button>
</section>

<form class="search" role="search">
  <svg viewBox="0 0 42 48" width="42" height="48" aria-hidden="true"><g fill="none" stroke="#8e8e93"><circle cx="16" cy="20" r="14" stroke-width="2"/><path d="M26 31L36 41" stroke-width="4" stroke-linecap="round"/></g></svg>
  <input type="search" aria-label="Search for a place" value="Eiffel Tower">
  <button type="button" aria-label="Dictate">
    <svg viewBox="0 0 34 54" width="34" height="54"><rect x="9" y="1" width="16" height="35" rx="8" fill="#8e8e93"/><path d="M3 21V27Q3 42 17 42Q31 42 31 27V21M17 42V50M10 50H24" fill="none" stroke="#8e8e93" stroke-width="4" stroke-linecap="round"/></svg>
  </button>
</form>
</main>

<footer class="footer">
  <svg class="tower" viewBox="0 2156 200 280" width="200" height="280" role="img" aria-label="Paris 24">
    <path d="M95 2160H104.500Q106 2205 104 2243L106 2265L100 2300L94 2265L96.500 2243Q94 2205 95 2160Z"/>
    <g fill="none" stroke-width="7" stroke-linecap="round">
      <path d="M99 2245C97 2290 89 2325 72 2359M101 2245C102 2290 112 2328 125 2361" stroke="#000"/>
      <path d="M72 2360C60 2385 42 2415 11 2423M125 2363C139 2393 160 2416 187 2426" stroke="#fdf9f9"/>
    </g>
    <text class="year"><tspan x="68" y="2397">2</tspan><tspan x="95" y="2410">4</tspan></text>
  </svg>
  <p>The official app of the IOC and the City of Paris</p>
</footer>
</body>
</html>
```
FILE: styles.css
```css
* { box-sizing: border-box; }

body {
  margin: 0;
  background: #fff;
  color: #000;
  font-family: "Liberation Sans", Arial, sans-serif;
}

h1, h2, p { margin: 0; font-weight: 400; }
a { color: inherit; text-decoration: none; }
svg { display: block; }
button {
  padding: 0;
  border: 0;
  background: none;
  color: inherit;
  font: inherit;
}

/* Status bar */
.status {
  display: flex;
  justify-content: space-between;
  align-items: center;
  margin: 0 2px;
  padding: 41px 37px 35px 94px;
  background: #000;
  color: #fff;
  border-bottom: 1px solid #777;
}
.status-time { font-size: 43px; line-height: 50px; font-weight: 700; }

/* Tabs */
.tabs {
  display: grid;
  grid-template-columns: 282fr 341fr 253fr 191fr;
  padding: 69px 0 50px 62px;
  font-size: 50px;
  line-height: 60px;
  color: #919191;
}
.tabs .active { color: #0a84ff; }

/* Map */
.map {
  position: relative;
  margin: 0 14px 0 9px;
  border: 1px solid #aaa;
}
.map-canvas { width: 100%; height: auto; }
.land { fill: #f7f7f7; }
.minor-edge, .minor-road, .major-edge, .major-road,
.bridge, .bridge-edge, .walkways, .lane, .lane-edge {
  fill: none;
  stroke-linejoin: round;
}
.minor-edge { stroke: #c4c4c4; stroke-width: 12; stroke-linecap: round; }
.minor-road { stroke: #fafafa; stroke-width: 6; stroke-linecap: round; }
.major-edge { stroke: #c0c0c0; stroke-width: 25; }
.major-road { stroke: #fdfdfd; stroke-width: 18; }
.water { fill: #c9c9c9; }
.quay-edge { fill: none; stroke: #c4c4c4; stroke-width: 18; stroke-linejoin: round; }
.quay { fill: none; stroke: #fdfdfd; stroke-width: 15; stroke-linejoin: round; }
.canal { fill: none; stroke: #c4c4c4; stroke-width: 8; }
.island { fill: #f7f7f7; stroke: #fdfdfd; stroke-width: 4; }
.lane-edge { stroke: #c6c6c6; stroke-width: 4; }
.lane { stroke: #fafafa; stroke-width: 2; }
.bridge-edge { stroke: #c4c4c4; stroke-width: 9; }
.bridge { stroke: #fdfdfd; stroke-width: 7; }
.walkways { stroke: #ececec; stroke-width: 6; }
.district, .city { fill: #444; font-family: "Noto Sans", sans-serif; text-anchor: middle; }
.district { font-size: 21px; }
.district.large { font-size: 22px; }
.district.small { font-size: 19px; }
.city { font-size: 31px; fill: #333; }
.place {
  fill: #222;
  font-family: Lato, sans-serif;
  font-size: 14px;
  font-weight: 700;
  text-anchor: middle;
}
.map-controls {
  position: absolute;
  top: 37px;
  right: 2px;
  display: grid;
  width: 90px;
  border-radius: 18px;
  background: #fff;
}
.map-controls button {
  display: flex;
  justify-content: center;
  align-items: center;
  height: 91px;
}
.map-controls button + button { border-top: 1px solid #999; }
.info-mark {
  font-family: "Liberation Serif", serif;
  font-size: 36px;
  font-weight: 700;
  text-anchor: middle;
}

/* Directions sheet */
.sheet {
  margin-top: 12px;
  padding-top: 7px;
  border-top: 1px solid #aaa;
  border-radius: 26px 26px 0 0;
}
.grabber {
  width: 71px;
  height: 9px;
  margin: 0 auto;
  border-radius: 4px;
  background: #9e9e9e;
}
.sheet-head {
  display: flex;
  justify-content: space-between;
  align-items: flex-start;
  padding: 24px 30px 62px 30px;
  border-bottom: 2px solid #c6c6c8;
}
.trip { padding-top: 15px; }
.trip h1, .route h2 { font-size: 40px; line-height: 48px; font-weight: 700; }
.trip p, .route p { font-size: 29px; line-height: 36px; }
.trip p { margin-top: 18px; }
.trip a { color: #007aff; }
.close { border-radius: 50%; background: #929294; }
.route {
  display: flex;
  justify-content: space-between;
  align-items: center;
  padding: 95px 30px 94px;
  border-bottom: 2px solid #c6c6c8;
}
.route-text {
  display: grid;
  gap: 22px;
  padding-bottom: 6px;
}
.route p { color: #808080; }
.go {
  width: 128px;
  height: 128px;
  border-radius: 18px;
  background: #686d68;
  color: #fff;
  font-size: 40px;
  font-weight: 700;
}

/* Travel modes */
.modes {
  display: grid;
  grid-template-columns: 295fr 318fr 78fr;
  justify-items: start;
  padding: 16px 91px 39px 347px;
  color: #808080;
  font-size: 38px;
  line-height: 44px;
}
.modes button { display: grid; justify-items: center; gap: 12px; }
.modes svg { fill: #808080; }

/* Search */
.search {
  display: flex;
  align-items: center;
  height: 120px;
  margin: 0 52px 62px 176px;
  padding: 0 18px;
  border-radius: 20px;
  background: #e4e4e4;
}
.search input {
  flex: 1;
  min-width: 0;
  padding: 0;
  border: 0;
  outline: 0;
  background: none;
  color: #8e8e93;
  font: 43px "Liberation Sans", Arial, sans-serif;
  -webkit-appearance: none;
  appearance: none;
}

/* Footer */
.footer {
  position: relative;
  margin: 0 2px;
  padding: 16px 0 16px 223px;
  background: #000;
  color: #fdf0f0;
  font-size: 36px;
  line-height: 44px;
}
.tower { position: absolute; left: -2px; bottom: 0; }
.year {
  fill: #000;
  stroke: #f8e6e8;
  stroke-width: 2;
  font-family: "Liberation Serif", serif;
  font-size: 52px;
}
```
